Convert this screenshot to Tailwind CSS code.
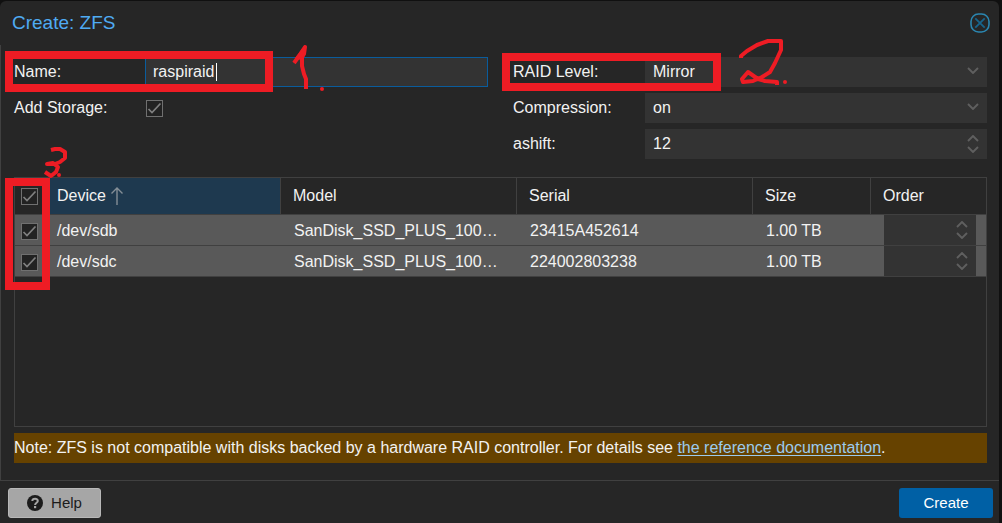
<!DOCTYPE html>
<html lang="en">
<head>
<meta charset="utf-8">
<title>Create: ZFS</title>
<script src="https://cdn.jsdelivr.net/npm/@tailwindcss/browser@4"></script>
</head>
<body class="relative min-h-screen bg-[#101010] pt-px pr-[3px] font-['Liberation_Sans',Arial,sans-serif] text-[16px] leading-5 text-[#f2f2f2]">
<svg class="hidden">
  <symbol id="tick" viewBox="0 0 17 17"><path d="M2.5 9 L6 12.5 L14.5 3.5" fill="none" stroke="#808080" stroke-width="1.7"/></symbol>
  <symbol id="down" viewBox="0 0 12 7"><path d="M1 1 L6 6 L11 1" fill="none" stroke="#5f5f5f" stroke-width="1.9"/></symbol>
  <symbol id="up" viewBox="0 0 12 7"><path d="M1 6 L6 1 L11 6" fill="none" stroke="#5f5f5f" stroke-width="1.9"/></symbol>
</svg>
<main class="flex min-h-[522px] flex-col rounded-t-md bg-[#262626]">
  <header class="flex h-11 items-center justify-between pr-[9px] pl-3">
    <h1 class="text-[19px] text-[#4fabf3]">Create: ZFS</h1>
    <button type="button" aria-label="Close" class="size-5">
      <svg viewBox="0 0 20 20" class="size-5" fill="none"><rect x="1" y="1" width="18" height="18" rx="7.5" stroke="#2b86b0" stroke-width="1.6"/><path d="M5.3 5.3 L14.7 14.7 M14.7 5.3 L5.3 14.7" stroke="#17648c" stroke-width="1.8"/></svg>
    </button>
  </header>

  <form class="flex grow flex-col">
    <div class="flex grow flex-col border-b border-l border-[#404040] pt-3 pr-3 pb-[17px] pl-[13px]">
      <div class="grid grid-cols-2 gap-[25px]">
        <div class="flex flex-col gap-1.5">
          <div class="flex h-[30px] items-center">
            <label for="name" class="w-[131px] shrink-0">Name:</label>
            <div class="relative h-full min-w-0 grow">
              <input id="name" type="text" value="raspiraid" class="h-full w-full border border-[#0a5c9c] bg-[#333333] px-[7px] outline-none">
              <span class="absolute top-1.5 left-[71px] h-[18px] w-px bg-white"></span>
            </div>
          </div>
          <div class="flex h-[30px] items-center">
            <label for="storage" class="w-[131px] shrink-0">Add Storage:</label>
            <span class="ml-px grid size-[17px]">
              <input id="storage" type="checkbox" checked class="col-start-1 row-start-1 size-[17px] appearance-none border border-[#707070] bg-[#222222]">
              <svg class="pointer-events-none col-start-1 row-start-1 size-[17px]"><use href="#tick"/></svg>
            </span>
          </div>
        </div>
        <div class="flex flex-col gap-1.5">
          <div class="flex h-[30px] items-center">
            <label for="raid" class="w-[132px] shrink-0">RAID Level:</label>
            <div class="relative h-full min-w-0 grow">
              <select id="raid" class="h-full w-full appearance-none bg-[#333333] px-2"><option>Mirror</option></select>
              <svg class="pointer-events-none absolute top-2.5 right-2 h-[7px] w-3"><use href="#down"/></svg>
            </div>
          </div>
          <div class="flex h-[30px] items-center">
            <label for="compression" class="w-[132px] shrink-0">Compression:</label>
            <div class="relative h-full min-w-0 grow">
              <select id="compression" class="h-full w-full appearance-none bg-[#333333] px-2"><option>on</option></select>
              <svg class="pointer-events-none absolute top-2.5 right-2 h-[7px] w-3"><use href="#down"/></svg>
            </div>
          </div>
          <div class="flex h-[30px] items-center">
            <label for="ashift" class="w-[132px] shrink-0">ashift:</label>
            <div class="relative h-full min-w-0 grow">
              <input id="ashift" type="text" inputmode="numeric" value="12" class="h-full w-full bg-[#333333] px-2">
              <span class="pointer-events-none absolute top-1.5 right-2 flex flex-col gap-1"><svg class="h-[7px] w-3"><use href="#up"/></svg><svg class="h-[7px] w-3"><use href="#down"/></svg></span>
            </div>
          </div>
        </div>
      </div>

      <div class="mt-[18px] min-h-[250px] grow border border-[#404040]">
        <table class="w-full table-fixed border-separate border-spacing-0 text-left">
          <colgroup><col class="w-[30px]"><col class="w-[236px]"><col class="w-[236px]"><col class="w-[236px]"><col class="w-[118px]"><col></colgroup>
          <thead>
            <tr class="h-[37px] [&>th]:border-b [&>th]:border-[#404040] [&>th]:font-normal">
              <th class="pl-1.5"><span class="grid size-[17px]"><input type="checkbox" checked aria-label="Select all" class="col-start-1 row-start-1 size-[17px] appearance-none border border-[#707070] bg-[#222222]"><svg class="pointer-events-none col-start-1 row-start-1 size-[17px]"><use href="#tick"/></svg></span></th>
              <th class="border-r bg-[#1e394f] pl-3" aria-sort="ascending"><span class="flex items-center gap-1">Device<svg viewBox="0 0 14 20" class="h-5 w-3.5" fill="none" stroke="#848e96" stroke-width="1.4"><path d="M7 19 V2 M1.5 7.5 L7 2 L12.5 7.5"/></svg></span></th>
              <th class="border-r pl-3">Model</th>
              <th class="border-r pl-3">Serial</th>
              <th class="border-r pl-3">Size</th>
              <th class="pl-3">Order</th>
            </tr>
          </thead>
          <tbody class="[&_td]:border-b [&_td]:border-[#404040]">
            <tr class="h-[31px] bg-[#595959]">
              <td class="pt-0.5 pl-1.5"><span class="grid size-[17px]"><input type="checkbox" checked aria-label="Select /dev/sdb" class="col-start-1 row-start-1 size-[17px] appearance-none border border-[#707070] bg-[#222222]"><svg class="pointer-events-none col-start-1 row-start-1 size-[17px]"><use href="#tick"/></svg></span></td>
              <td class="truncate px-3 pt-0.5">/dev/sdb</td>
              <td class="truncate px-[13px] pt-0.5">SanDisk_SSD_PLUS_1000GB</td>
              <td class="truncate px-[13px] pt-0.5">23415A452614</td>
              <td class="truncate px-[13px] pt-0.5">1.00 TB</td>
              <td class="pr-2.5 pl-[13px]"><div class="relative h-[30px]"><input type="text" aria-label="Order of /dev/sdb" class="block h-full w-full bg-[#333333] px-2"><span class="pointer-events-none absolute top-1.5 right-2 flex flex-col gap-1"><svg class="h-[7px] w-3"><use href="#up"/></svg><svg class="h-[7px] w-3"><use href="#down"/></svg></span></div></td>
            </tr>
            <tr class="h-[31px] bg-[#595959]">
              <td class="pt-0.5 pl-1.5"><span class="grid size-[17px]"><input type="checkbox" checked aria-label="Select /dev/sdc" class="col-start-1 row-start-1 size-[17px] appearance-none border border-[#707070] bg-[#222222]"><svg class="pointer-events-none col-start-1 row-start-1 size-[17px]"><use href="#tick"/></svg></span></td>
              <td class="truncate px-3 pt-0.5">/dev/sdc</td>
              <td class="truncate px-[13px] pt-0.5">SanDisk_SSD_PLUS_1000GB</td>
              <td class="truncate px-[13px] pt-0.5">224002803238</td>
              <td class="truncate px-[13px] pt-0.5">1.00 TB</td>
              <td class="pr-2.5 pl-[13px]"><div class="relative h-[30px]"><input type="text" aria-label="Order of /dev/sdc" class="block h-full w-full bg-[#333333] px-2"><span class="pointer-events-none absolute top-1.5 right-2 flex flex-col gap-1"><svg class="h-[7px] w-3"><use href="#up"/></svg><svg class="h-[7px] w-3"><use href="#down"/></svg></span></div></td>
            </tr>
          </tbody>
        </table>
      </div>

      <p class="mt-1.5 bg-[#664200] py-[5px]">Note: ZFS is not compatible with disks backed by a hardware RAID controller. For details see <a href="#" class="text-[#9bcbee] underline underline-offset-2">the reference documentation</a>.</p>
    </div>

    <footer class="flex items-start justify-between pt-[7px] pr-1.5 pb-[5px] pl-2 text-[15px]">
      <button type="button" class="flex h-[30px] w-[93px] items-center justify-center gap-2 rounded-[3px] border border-[#b8b8b8] bg-[#a6a6a6] text-[#1c1c1c]">
        <svg viewBox="0 0 16 16" class="size-4"><circle cx="8" cy="8" r="8" fill="#1c1c1c"/><path d="M5.3 6 C5.5 3.2 10.8 3.1 10.8 6 C10.8 7.8 8.1 7.8 8.1 10" fill="none" stroke="#a6a6a6" stroke-width="2"/><rect x="7" y="11" width="2.2" height="2.2" fill="#a6a6a6"/></svg>
        Help
      </button>
      <button type="submit" class="h-[30px] w-[94px] rounded-[3px] bg-[#0060a5] text-white">Create</button>
    </footer>
  </form>
</main>

<svg class="pointer-events-none absolute top-0 left-0" width="1002" height="523" fill="none" stroke="#ee1c24" aria-hidden="true">
  <g stroke-width="8"><rect x="9" y="55" width="260" height="33"/><rect x="506" y="57" width="211" height="30"/><rect x="9" y="182" width="37" height="104"/></g>
  <g stroke-width="4" stroke-linejoin="round">
    <path d="M294 63 L299 56 L305 47 L304 54 L302 57 V66 L304 74 L306 79 V89"/>
    <path d="M741 58 L741 56 L747 51 L757 45 L768 41 L781 41 V50 L775 63 L770 72 L762 77 L753 81 L743 82 L742 79 L748 72 L758 79 L765 81 L777 82 V85"/>
    <path d="M51 150 L55 149 L60 149 L65 152 V158 L60 162 L55 164 L47 164 L53 163 L58 167 L56 172 L51 176 L45 172"/>
  </g>
  <path d="M295 58 L305 45 V56 L299 60 Z" fill="#ee1c24" stroke="none"/>
  <g fill="#ee1c24" stroke="none"><circle cx="322" cy="89" r="2"/><circle cx="785" cy="82" r="2"/><circle cx="59" cy="175" r="2"/></g>
</svg>
</body>
</html>
